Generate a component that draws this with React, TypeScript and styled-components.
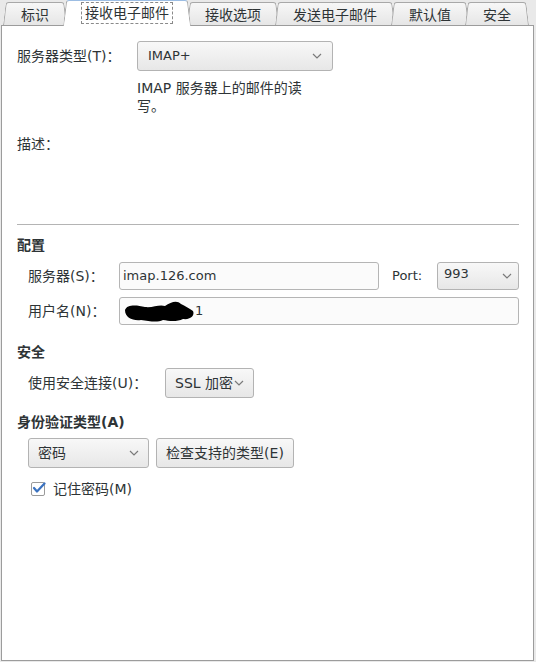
import React from 'react';
import styled, { createGlobalStyle, css } from 'styled-components';

const GlobalStyle = createGlobalStyle`
  html, body {
    margin: 0;
    padding: 0;
    background: #e9e9e9;
  }
  body {
    font-family: "DejaVu Sans", "Noto Sans CJK SC", sans-serif;
    font-size: 14px;
    color: #2e3436;
  }
`;

const tabs = ['标识', '接收电子邮件', '接收选项', '发送电子邮件', '默认值', '安全'];

const Chevron = () => (
  <svg width="10" height="6" viewBox="0 0 10 6">
    <polyline points="1,1 5,5 9,1" fill="none" stroke="#7a7a7a" strokeWidth="1.2" />
  </svg>
);

const Redaction = () => (
  <svg width="72" height="26" viewBox="0 0 72 26">
    <path
      d="M2 12 C4 6 14 7 22 9 C30 10 36 6 42 8 C48 4 54 2 58 6 C62 8 66 10 70 13 C72 17 68 22 60 21 C54 24 46 23 40 22 C34 25 26 23 18 22 C10 23 2 20 2 12 Z"
      fill="#000"
    />
  </svg>
);

const App = () => {
  return (
    <Window>
      <GlobalStyle />
      <TabBar>
        {tabs.map((t, i) => (
          <Tab key={t} $active={i === 1}>
            {i === 1 ? <Focus>{t}</Focus> : t}
          </Tab>
        ))}
      </TabBar>
      <Panel>
        <TypeRow>
          <TypeLabel>服务器类型(T)：</TypeLabel>
          <Combo $width={196} $pad={10}>
            <Latin>IMAP+</Latin>
            <Chevron />
          </Combo>
        </TypeRow>
        <Desc>IMAP 服务器上的邮件的读写。</Desc>
        <Plain $top={20}>描述：</Plain>
        <Separator />
        <Heading $top={11}>配置</Heading>
        <FieldRow $top={8}>
          <FieldLabel $width={91}>服务器(S)：</FieldLabel>
          <Input>
            <Latin>imap.126.com</Latin>
          </Input>
          <PortLabel>Port:</PortLabel>
          <Combo $width={82} $height={28} $pad={6}>
            <PortValue>993</PortValue>
            <Chevron />
          </Combo>
        </FieldRow>
        <FieldRow $top={7}>
          <FieldLabel $width={91}>用户名(N)：</FieldLabel>
          <Input>
            <Redaction />
            <Latin>1</Latin>
          </Input>
        </FieldRow>
        <Heading $top={18}>安全</Heading>
        <FieldRow $top={7}>
          <FieldLabel $width={137}>使用安全连接(U)：</FieldLabel>
          <Combo $width={89} $pad={9}>
            <span>SSL 加密</span>
            <Chevron />
          </Combo>
        </FieldRow>
        <Heading $top={15}>身份验证类型(A)</Heading>
        <AuthRow>
          <Combo $width={121} $pad={9}>
            <span>密码</span>
            <Chevron />
          </Combo>
          <Button>检查支持的类型(E)</Button>
        </AuthRow>
        <CheckRow>
          <CheckBox>
            <svg width="14" height="12" viewBox="0 0 14 12">
              <path d="M2 6 L5 9.5 L12.5 1.5" fill="none" stroke="#3a72c0" strokeWidth="2.2" strokeLinecap="round" strokeLinejoin="round" />
            </svg>
          </CheckBox>
          <span>记住密码(M)</span>
        </CheckRow>
      </Panel>
    </Window>
  );
};

export default App;

const Window = styled.div`
  width: 536px;
  height: 662px;
  display: flex;
  flex-direction: column;
  box-sizing: border-box;
  overflow: hidden;
`;

const TabBar = styled.div`
  height: 26px;
  display: flex;
  align-items: flex-end;
  padding-left: 3px;
  position: relative;
  z-index: 2;
`;

const tabHalf = css`
  content: '';
  position: absolute;
  top: 0;
  bottom: 0;
  z-index: -1;
  border-top: 1px solid #a8a8a8;
  transform-origin: bottom;
`;

const Tab = styled.div<{ $active?: boolean }>`
  position: relative;
  z-index: ${({ $active }) => ($active ? 2 : 1)};
  height: ${({ $active }) => ($active ? 26 : 23)}px;
  margin-bottom: ${({ $active }) => ($active ? 0 : 1)}px;
  padding: 0 18px;
  margin-left: -4px;
  display: flex;
  align-items: center;
  justify-content: center;
  white-space: nowrap;
  color: #2e3436;
  &:first-child {
    margin-left: 0;
  }
  &::before {
    ${tabHalf};
    left: 0;
    right: 50%;
    border-left: 1px solid #a8a8a8;
    border-top-left-radius: 3px;
    transform: skewX(-7deg);
    background: ${({ $active }) => ($active ? '#fff' : 'linear-gradient(#f7f7f7, #e6e6e6)')};
    ${({ $active }) => $active && 'border-top-color: #9cbde3;'}
  }
  &::after {
    ${tabHalf};
    left: 50%;
    right: 0;
    border-right: 1px solid #a8a8a8;
    border-top-right-radius: 3px;
    transform: skewX(7deg);
    background: ${({ $active }) => ($active ? '#fff' : 'linear-gradient(#f7f7f7, #e6e6e6)')};
    ${({ $active }) => $active && 'border-top-color: #9cbde3;'}
  }
`;

const Focus = styled.span`
  border: 1px dashed #8a8a8a;
  padding: 1px 3px;
  line-height: 18px;
`;

const Panel = styled.div`
  flex: 1;
  margin: -1px 2px 1px 1px;
  border: 1px solid #9c9c9c;
  background: #fff;
  padding: 15px 14px 0 15px;
  position: relative;
  z-index: 1;
  display: flex;
  flex-direction: column;
  align-items: flex-start;
  line-height: 18px;
`;

const Latin = styled.span`
  font-size: 13px;
`;

const TypeRow = styled.div`
  display: flex;
  align-items: center;
`;

const TypeLabel = styled.span`
  width: 120px;
`;

const Combo = styled.div<{ $width: number; $height?: number; $pad: number }>`
  box-sizing: border-box;
  width: ${({ $width }) => $width}px;
  height: ${({ $height }) => $height ?? 30}px;
  padding: 0 ${({ $pad }) => $pad}px;
  display: flex;
  align-items: center;
  justify-content: space-between;
  border: 1px solid #b3b3b3;
  border-radius: 3px;
  background: linear-gradient(#f8f8f8, #e7e7e7);
  white-space: nowrap;
`;

const Desc = styled.div`
  margin: 8px 0 0 120px;
  width: 190px;
  line-height: 18px;
`;

const Plain = styled.div<{ $top: number }>`
  margin-top: ${({ $top }) => $top}px;
`;

const Separator = styled.div`
  align-self: stretch;
  height: 1px;
  background: #b4b4b4;
  margin-top: 71px;
`;

const Heading = styled.div<{ $top: number }>`
  margin-top: ${({ $top }) => $top}px;
  font-weight: bold;
`;

const FieldRow = styled.div<{ $top: number }>`
  align-self: stretch;
  display: flex;
  align-items: center;
  margin-top: ${({ $top }) => $top}px;
  padding-left: 11px;
`;

const FieldLabel = styled.span<{ $width: number }>`
  width: ${({ $width }) => $width}px;
  flex: none;
`;

const Input = styled.div`
  flex: 1;
  box-sizing: border-box;
  height: 28px;
  padding: 0 4px 0 3px;
  display: flex;
  align-items: center;
  border: 1px solid #b5b5b5;
  border-radius: 3px;
  background: #fbfbfb;
  color: #2e3436;
`;

const PortLabel = styled.span`
  width: 35px;
  font-size: 13px;
  margin: 0 10px 0 13px;
`;

const PortValue = styled.span`
  font-size: 13px;
  margin-top: -5px;
`;

const AuthRow = styled.div`
  display: flex;
  gap: 7px;
  margin-top: 7px;
  padding-left: 11px;
`;

const Button = styled.div`
  box-sizing: border-box;
  width: 138px;
  height: 30px;
  display: flex;
  align-items: center;
  justify-content: center;
  border: 1px solid #b3b3b3;
  border-radius: 3px;
  background: linear-gradient(#f8f8f8, #e7e7e7);
  white-space: nowrap;
`;

const CheckRow = styled.div`
  display: flex;
  align-items: center;
  margin-top: 12px;
  padding-left: 14px;
  gap: 8px;
`;

const CheckBox = styled.span`
  position: relative;
  width: 12px;
  height: 12px;
  border: 1px solid #9a9a9a;
  border-radius: 2px;
  background: #fff;
  svg {
    position: absolute;
    left: 0;
    top: -1px;
  }
`;
